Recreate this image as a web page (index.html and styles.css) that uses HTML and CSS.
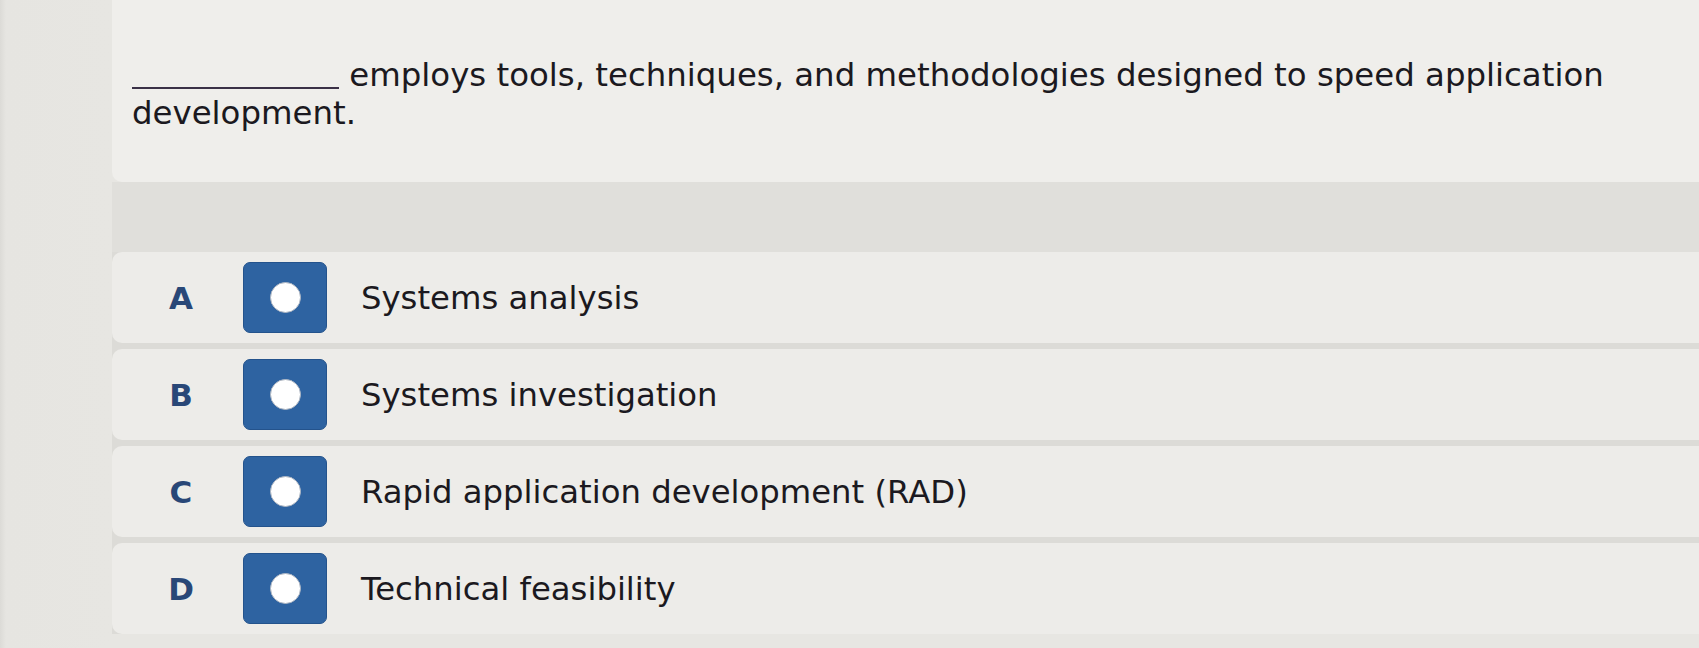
FILE: index.html
```html
<!DOCTYPE html>
<html lang="en">
<head>
<meta charset="utf-8">
<title>Question</title>
<link rel="stylesheet" href="styles.css">
</head>
<body>
<main class="page">
  <section class="question">
    <p class="stem"><span class="blank"></span> employs tools, techniques, and methodologies designed to speed application development.</p>
  </section>
  <div class="band"></div>
  <ul class="options">
    <li class="option">
      <span class="letter">A</span>
      <span class="radio"><span class="dot"></span></span>
      <span class="label">Systems analysis</span>
    </li>
    <li class="option">
      <span class="letter">B</span>
      <span class="radio"><span class="dot"></span></span>
      <span class="label">Systems investigation</span>
    </li>
    <li class="option">
      <span class="letter">C</span>
      <span class="radio"><span class="dot"></span></span>
      <span class="label">Rapid application development (RAD)</span>
    </li>
    <li class="option">
      <span class="letter">D</span>
      <span class="radio"><span class="dot"></span></span>
      <span class="label">Technical feasibility</span>
    </li>
  </ul>
</main>
</body>
</html>
```

FILE: styles.css
```css
html, body {
  margin: 0;
  padding: 0;
}

body {
  width: 1699px;
  height: 648px;
  overflow: hidden;
  background: linear-gradient(90deg, #dcdbd7 0px, #e6e5e1 6px, #e7e6e2 112px);
  font-family: "DejaVu Sans", Verdana, sans-serif;
  color: #1b1920;
}

.page {
  padding-left: 112px;
}

.question {
  background: #efeeeb;
  border-radius: 0 0 0 10px;
  padding: 56px 40px 50px 20px;
}

.stem {
  margin: 0;
  font-size: 32.4px;
  line-height: 38px;
}

.blank {
  display: inline-block;
  width: 207px;
  height: 30px;
  border-bottom: 2px solid #3a3046;
  vertical-align: baseline;
  margin-bottom: -3px;
}

.band {
  height: 70px;
  background: #e0dfdb;
}

.options {
  list-style: none;
  margin: 0;
  padding: 0;
  display: flex;
  flex-direction: column;
  gap: 6px;
  background: #dcdbd7;
}

.option {
  display: flex;
  align-items: center;
  height: 91px;
  background: #edece9;
  border-radius: 10px 0 0 10px;
}

.letter {
  width: 48px;
  margin-left: 45px;
  margin-right: 38px;
  text-align: center;
  font-weight: bold;
  font-size: 31px;
  color: #294777;
}

.radio {
  width: 84px;
  height: 71px;
  box-sizing: border-box;
  background: #2e63a1;
  border: 1px solid #24538c;
  border-radius: 7px;
  display: flex;
  align-items: center;
  justify-content: center;
}

.dot {
  width: 31px;
  height: 31px;
  box-sizing: border-box;
  border-radius: 50%;
  background: #ffffff;
  border: 1.5px solid #aeb6c2;
}

.label {
  margin-left: 34px;
  font-size: 32.3px;
  color: #1b1920;
}
```
